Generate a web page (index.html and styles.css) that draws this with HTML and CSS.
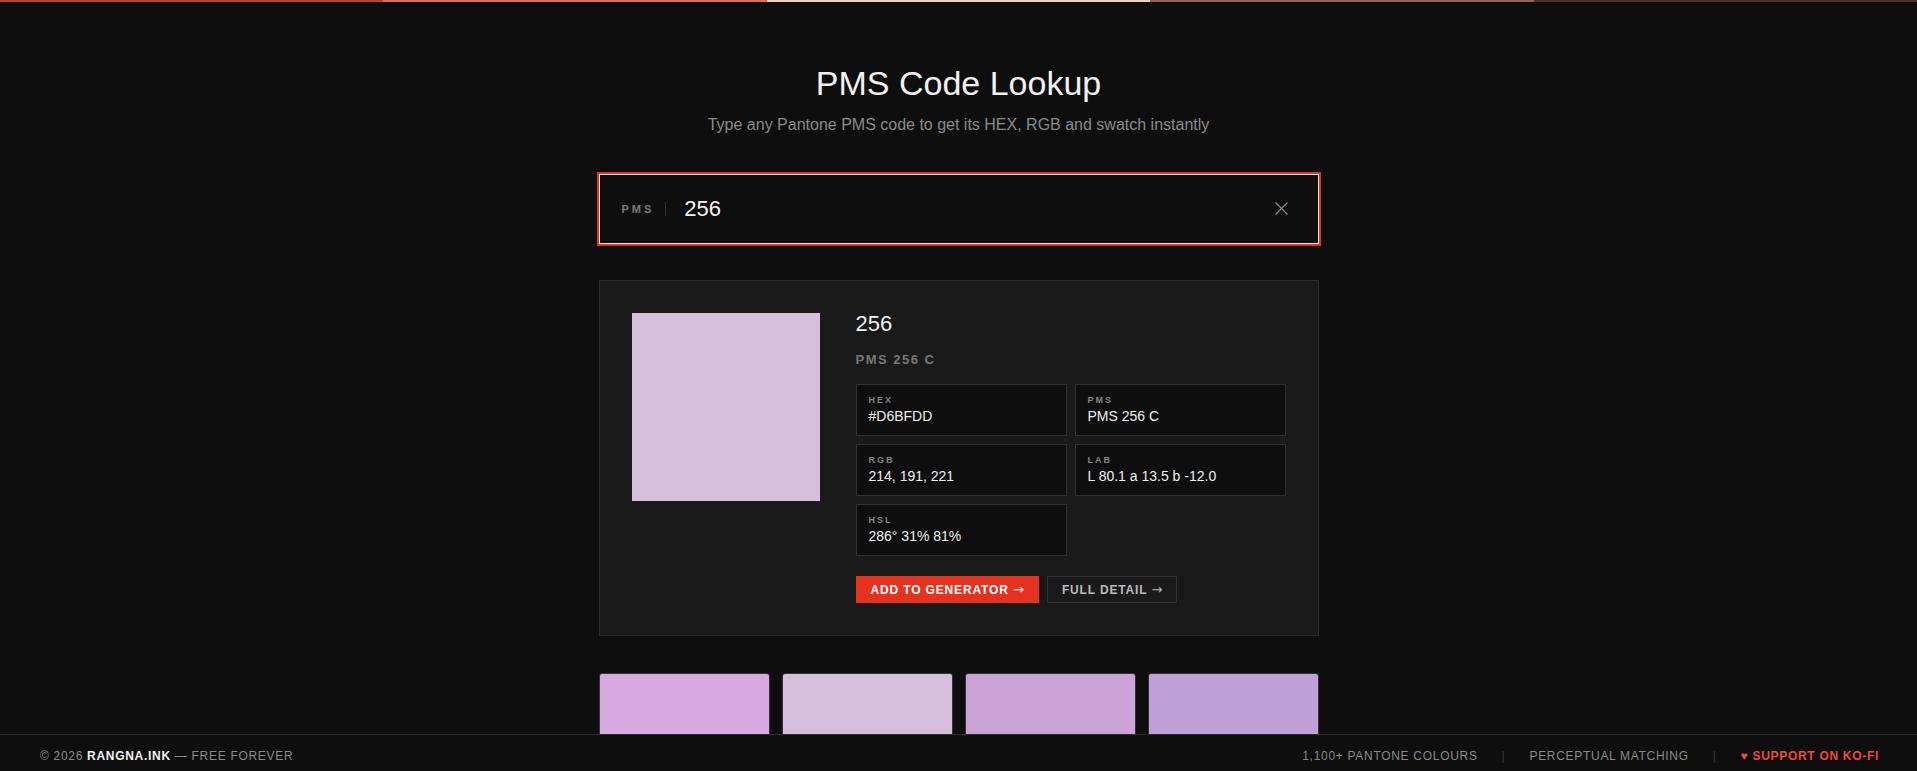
FILE: index.html
```html
<!DOCTYPE html>
<html lang="en">
<head>
    <meta charset="UTF-8">
    <meta name="viewport" content="width=device-width, initial-scale=1.0">
    <title>PMS Code Lookup</title>
    <link rel="stylesheet" href="styles.css">
</head>
<body>
    <div class="topbar">
        <span class="seg seg-1"></span>
        <span class="seg seg-2"></span>
        <span class="seg seg-3"></span>
        <span class="seg seg-4"></span>
        <span class="seg seg-5"></span>
    </div>

    <main class="page">
        <header class="hero">
            <h1 class="title">PMS Code Lookup</h1>
            <p class="subtitle">Type any Pantone PMS code to get its HEX, RGB and swatch instantly</p>
        </header>

        <!-- search -->
        <div class="search">
            <span class="search-label">PMS</span>
            <span class="search-sep"></span>
            <input class="search-input" type="text" value="256">
            <button class="search-clear" aria-label="Clear">
                <svg width="13" height="13" viewBox="0 0 13 13" fill="none" stroke="#8a8a8a" stroke-width="1.2">
                    <path d="M0.5 0.5 L12.5 12.5 M12.5 0.5 L0.5 12.5"/>
                </svg>
            </button>
        </div>

        <!-- result -->
        <section class="result">
            <div class="result-swatch" style="background: #D6BFDD;"></div>
            <div class="result-info">
                <div class="result-name">256</div>
                <div class="result-code">PMS 256 C</div>
                <div class="values">
                    <div class="value-box">
                        <div class="value-label">HEX</div>
                        <div class="value-text">#D6BFDD</div>
                    </div>
                    <div class="value-box">
                        <div class="value-label">PMS</div>
                        <div class="value-text">PMS 256 C</div>
                    </div>
                    <div class="value-box">
                        <div class="value-label">RGB</div>
                        <div class="value-text">214, 191, 221</div>
                    </div>
                    <div class="value-box">
                        <div class="value-label">LAB</div>
                        <div class="value-text">L 80.1 a 13.5 b -12.0</div>
                    </div>
                    <div class="value-box">
                        <div class="value-label">HSL</div>
                        <div class="value-text">286° 31% 81%</div>
                    </div>
                </div>
                <div class="actions">
                    <button class="btn btn-primary">ADD TO GENERATOR <span class="arrow">→</span></button>
                    <button class="btn btn-ghost">FULL DETAIL <span class="arrow">→</span></button>
                </div>
            </div>
        </section>

        <!-- similar colours -->
        <section class="similar">
            <div class="similar-card">
                <div class="similar-swatch" style="background: #D8A8E0;"></div>
                <div class="similar-info"><span class="similar-code">PMS 2573 C</span><span class="similar-hex">#D8A8E0</span></div>
            </div>
            <div class="similar-card">
                <div class="similar-swatch" style="background: #D6BFDD;"></div>
                <div class="similar-info"><span class="similar-code">PMS 256 C</span><span class="similar-hex">#D6BFDD</span></div>
            </div>
            <div class="similar-card">
                <div class="similar-swatch" style="background: #CBA3D6;"></div>
                <div class="similar-info"><span class="similar-code">PMS 257 C</span><span class="similar-hex">#CBA3D6</span></div>
            </div>
            <div class="similar-card">
                <div class="similar-swatch" style="background: #C1A0D8;"></div>
                <div class="similar-info"><span class="similar-code">PMS 2563 C</span><span class="similar-hex">#C1A0D8</span></div>
            </div>
        </section>
    </main>

    <footer class="footer">
        <div class="footer-left">© 2026 <b>RANGNA.INK</b> — FREE FOREVER</div>
        <div class="footer-right">
            <span>1,100+ PANTONE COLOURS</span>
            <span class="footer-sep">|</span>
            <span>PERCEPTUAL MATCHING</span>
            <span class="footer-sep">|</span>
            <a class="footer-kofi" href="#">♥ SUPPORT ON KO-FI</a>
        </div>
    </footer>
</body>
</html>
```

FILE: styles.css
```css
html {
    background: #0e0e0e;
}
body {
    margin: 0;
    background: #0e0e0e;
    color: #eeeeee;
    font-family: "Liberation Sans", Arial, sans-serif;
}
::-webkit-scrollbar {
    width: 4px;
}
::-webkit-scrollbar-track {
    background: #0e0e0e;
}
::-webkit-scrollbar-thumb {
    background: #9a9a9a;
}

/* top stripe */
.topbar {
    display: flex;
    height: 2px;
}
.seg {
    flex: 1;
}
.seg-1 { background: #c2401b; }
.seg-2 { background: #dc7447; }
.seg-3 { background: #f0d3b2; }
.seg-4 { background: #94664a; }
.seg-5 { background: #563031; }

.page {
    width: 720px;
    margin: 0 auto;
    padding: 61px 0 140px;
}

.hero {
    text-align: center;
}
.title {
    margin: 0;
    font-size: 34px;
    font-weight: normal;
    line-height: 1.2;
    color: #f2f2f2;
}
.subtitle {
    margin: 9px 0 37px;
    font-size: 16px;
    line-height: 1.5;
    color: #8a8a8a;
}

/* search box */
.search {
    display: flex;
    align-items: center;
    height: 70px;
    box-sizing: border-box;
    padding: 0 26px 0 22px;
    border: 1px solid #ececec;
    box-shadow: 0 0 0 2px #e5321f;
}
.search-label {
    font-size: 11px;
    font-weight: bold;
    letter-spacing: 3px;
    color: #7a7a7a;
    margin-right: 11px;
}
.search-sep {
    width: 1px;
    height: 14px;
    background: #333;
    margin-right: 18px;
}
.search-input {
    flex: 1;
    background: none;
    border: none;
    outline: none;
    padding: 0;
    font-family: inherit;
    font-size: 22px;
    color: #f5f5f5;
}
.search-clear {
    display: flex;
    align-items: center;
    justify-content: center;
    width: 20px;
    height: 20px;
    padding: 0;
    background: none;
    border: none;
    cursor: pointer;
}

/* result card */
.result {
    display: flex;
    gap: 36px;
    margin-top: 36px;
    padding: 32px;
    background: #1a1a1a;
    border: 1px solid #2c2c2c;
}
.result-swatch {
    flex: none;
    width: 188px;
    height: 188px;
}
.result-info {
    flex: 1;
}
.result-name {
    font-size: 22px;
    line-height: 22px;
    color: #f4f4f4;
    margin-bottom: 17px;
}
.result-code {
    font-size: 13px;
    line-height: 16px;
    font-weight: bold;
    letter-spacing: 1.5px;
    color: #777;
    margin-bottom: 16px;
}
.values {
    display: grid;
    grid-template-columns: 1fr 1fr;
    gap: 8px;
}
.value-box {
    padding: 10px 12px;
    background: #0e0e0e;
    border: 1px solid #303030;
}
.value-label {
    font-size: 9px;
    line-height: 11px;
    font-weight: bold;
    letter-spacing: 2px;
    color: #858585;
}
.value-text {
    margin-top: 1px;
    font-size: 14px;
    line-height: 18px;
    color: #eeeeee;
}
.actions {
    display: flex;
    gap: 8px;
    margin-top: 20px;
}
.btn {
    height: 27px;
    padding: 0 14px;
    font-family: inherit;
    font-size: 12px;
    font-weight: bold;
    letter-spacing: 0.85px;
    cursor: pointer;
}
.btn .arrow {
    font-family: "DejaVu Sans", sans-serif;
    font-size: 13px;
    font-weight: normal;
    letter-spacing: 0;
}
.btn-primary {
    background: #e5321f;
    border: 1px solid #e5321f;
    color: #ffffff;
}
.btn-ghost {
    background: none;
    border: 1px solid #333;
    color: #bbbbbb;
}

/* similar colours */
.similar {
    display: grid;
    grid-template-columns: repeat(4, 1fr);
    gap: 12px;
    margin-top: 37px;
}
.similar-card {
    border: 1px solid #333;
    border-radius: 3px;
    overflow: hidden;
    background: #1a1a1a;
}
.similar-swatch {
    height: 120px;
}
.similar-info {
    display: flex;
    flex-direction: column;
    gap: 4px;
    padding: 10px 12px;
    font-size: 12px;
}
.similar-code {
    color: #eee;
    font-weight: bold;
}
.similar-hex {
    color: #888;
}

/* footer */
.footer {
    position: fixed;
    left: 0;
    right: 0;
    bottom: 0;
    height: 37px;
    box-sizing: border-box;
    display: flex;
    justify-content: space-between;
    align-items: center;
    padding: 6px 38px 0 40px;
    background: #0e0e0e;
    border-top: 1px solid #2a2a2a;
    font-size: 12px;
    letter-spacing: 0.7px;
    color: #8a8a8a;
}
.footer-left b {
    color: #f4f4f4;
}
.footer-right {
    display: flex;
    gap: 24px;
}
.footer-sep {
    color: #383838;
}
.footer-kofi {
    color: #f0483a;
    font-weight: bold;
    text-decoration: none;
}
```
